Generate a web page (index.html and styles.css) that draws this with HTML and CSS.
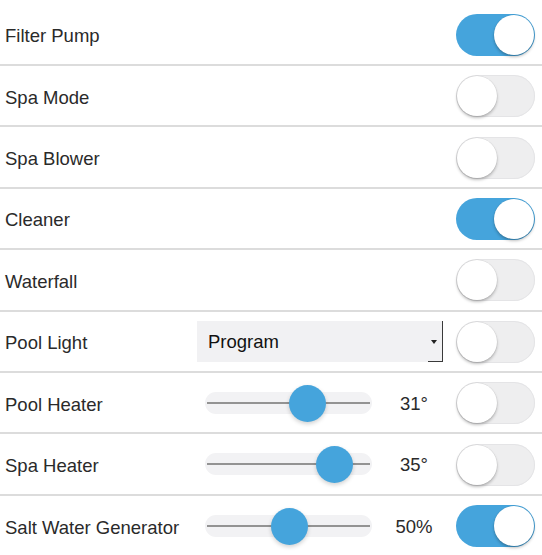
FILE: index.html
```
<!DOCTYPE html>
<html>
<head>
<meta charset="utf-8">
<link rel="stylesheet" href="styles.css">
</head>
<body>
<div class="list">
  <div class="row"><div class="label">Filter Pump</div><div class="mid"></div><div class="toggle on"><span class="knob"></span></div></div>
  <div class="row"><div class="label">Spa Mode</div><div class="mid"></div><div class="toggle"><span class="knob"></span></div></div>
  <div class="row"><div class="label">Spa Blower</div><div class="mid"></div><div class="toggle"><span class="knob"></span></div></div>
  <div class="row"><div class="label">Cleaner</div><div class="mid"></div><div class="toggle on"><span class="knob"></span></div></div>
  <div class="row"><div class="label">Waterfall</div><div class="mid"></div><div class="toggle"><span class="knob"></span></div></div>
  <div class="row"><div class="label">Pool Light</div><div class="mid"><div class="select"><span class="sel-text">Program</span><span class="arrow"></span></div></div><div class="toggle"><span class="knob"></span></div></div>
  <div class="row"><div class="label">Pool Heater</div><div class="mid"><div class="slider"><span class="line"></span><span class="thumb" style="left:83.5px"></span></div><div class="value">31°</div></div><div class="toggle"><span class="knob"></span></div></div>
  <div class="row"><div class="label">Spa Heater</div><div class="mid"><div class="slider"><span class="line"></span><span class="thumb" style="left:111px"></span></div><div class="value">35°</div></div><div class="toggle"><span class="knob"></span></div></div>
  <div class="row"><div class="label">Salt Water Generator</div><div class="mid"><div class="slider"><span class="line"></span><span class="thumb" style="left:66px"></span></div><div class="value">50%</div></div><div class="toggle on"><span class="knob"></span></div></div>
</div>
</body>
</html>
```
FILE: styles.css
```
html, body {
  margin: 0;
  padding: 0;
  background: #ffffff;
}
body {
  font-family: "Liberation Sans", Arial, Helvetica, sans-serif;
  color: #2a2a2a;
  overflow: hidden;
}
.list {
  padding-top: 4.5px;
}
.row {
  display: grid;
  grid-template-columns: 197px 259px 80px;
  align-items: center;
  height: 59.43px;
  border-bottom: 2px solid #dcdcdc;
  padding-right: 6px;
}
.label {
  font-size: 18.5px;
  padding-left: 5px;
  white-space: nowrap;
  padding-top: 4px;
}
.mid {
  display: flex;
  align-items: center;
}
.select {
  position: relative;
  width: 246px;
  height: 41px;
  background: #f1f1f3;
  display: flex;
  align-items: center;
  box-sizing: border-box;
  padding-left: 11px;
  border-right: 1px solid #3a3a3a;
  margin-top: 1px;
}
.select::after {
  content: "";
  position: absolute;
  right: -1px;
  bottom: 0;
  width: 15px;
  height: 1px;
  background: #3a3a3a;
}
.sel-text {
  font-size: 18.5px;
  color: #111111;
  flex: 1;
  padding-top: 1px;
}
.arrow {
  width: 0;
  height: 0;
  border-left: 3px solid transparent;
  border-right: 3px solid transparent;
  border-top: 4px solid #222222;
  margin-right: 5px;
  margin-top: 1px;
}
.slider {
  position: relative;
  margin-left: 8px;
  width: 167px;
  height: 22px;
  border-radius: 11px;
  background: #f2f2f4;
}
.line {
  position: absolute;
  left: 2px;
  right: 2px;
  top: 10px;
  height: 2px;
  background: #939393;
}
.thumb {
  position: absolute;
  top: -7px;
  width: 37px;
  height: 37px;
  border-radius: 50%;
  background: #45a4dc;
  box-shadow: 0 2px 4px rgba(0,0,0,0.18);
}
.value {
  flex: 1;
  text-align: center;
  font-size: 18.5px;
  color: #2a2a2a;
  padding-top: 2px;
}
.toggle {
  position: relative;
  width: 79px;
  height: 42px;
  border-radius: 21px;
  background: #eeeeef;
  box-shadow: inset 0 0 0 1px #e4e4e6;
  box-sizing: border-box;
  margin-top: 1px;
}
.toggle .knob {
  position: absolute;
  top: 1px;
  left: 1px;
  width: 40px;
  height: 40px;
  border-radius: 50%;
  background: #ffffff;
  box-shadow: 0 2px 3px rgba(0,0,0,0.25), 0 0 0 0.5px rgba(0,0,0,0.08);
}
.toggle.on {
  background: #45a4dc;
  box-shadow: none;
}
.toggle.on .knob {
  left: auto;
  right: 1px;
}
```
